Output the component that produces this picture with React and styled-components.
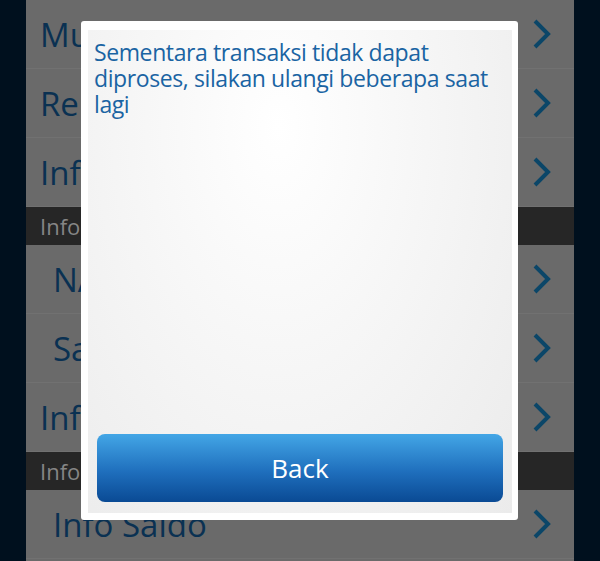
import styled, { createGlobalStyle } from "styled-components";

const GlobalStyle = createGlobalStyle`
  html, body {
    margin: 0;
    padding: 0;
    background: #00101e;
    overflow: hidden;
  }
  body {
    font-family: "Open Sans", "Noto Sans", sans-serif;
  }
`;

const menu = [
  { type: "row", label: "Mutasi Rekening" },
  { type: "row", label: "Rekening" },
  { type: "row", label: "Info Kartu Kredit" },
  { type: "header", label: "Info Lainnya" },
  { type: "row", label: "NAB Reksadana", indent: true },
  { type: "row", label: "Saldo Reksadana", indent: true },
  { type: "row", label: "Info Kurs" },
  { type: "header", label: "Info Rekening" },
  { type: "row", label: "Info Saldo", indent: true },
];

const Chevron = () => (
  <svg width="20" height="30" viewBox="0 0 20 30">
    <path
      d="M3 2 L16 15 L3 28"
      fill="none"
      stroke="#0b4668"
      strokeWidth="4"
      strokeLinejoin="miter"
    />
  </svg>
);

const App = () => {
  return (
    <>
      <GlobalStyle />
      <Screen>
        <Side />
        <List>
          {menu.map((item, i) =>
            item.type === "header" ? (
              <Header key={i}>{item.label}</Header>
            ) : (
              <Row key={i}>
                <RowLabel $indent={item.indent}>{item.label}</RowLabel>
                <Chevron />
              </Row>
            )
          )}
        </List>
        <Side />
        <Dialog>
          <Panel>
            <Message>
              Sementara transaksi tidak dapat diproses, silakan ulangi beberapa
              saat lagi
            </Message>
            <BackButton>Back</BackButton>
          </Panel>
        </Dialog>
      </Screen>
    </>
  );
};

const Screen = styled.div`
  position: relative;
  display: flex;
  width: 600px;
  height: 561px;
  overflow: hidden;
`;

const Side = styled.div`
  width: 26px;
  flex-shrink: 0;
  background: #00101e;
`;

const List = styled.div`
  flex: 1;
  display: flex;
  flex-direction: column;
  background: #6a6a6a;
`;

const Row = styled.div`
  height: 68px;
  flex-shrink: 0;
  display: flex;
  align-items: center;
  justify-content: space-between;
  padding: 0 22px 0 14px;
  border-bottom: 1px solid #717171;
`;

const RowLabel = styled.span`
  padding-left: ${(p) => (p.$indent ? "13px" : "0")};
  font-size: 33px;
  color: #0a3152;
  white-space: nowrap;
`;

const Header = styled.div`
  height: 38px;
  flex-shrink: 0;
  display: flex;
  align-items: center;
  padding-left: 14px;
  background: #262626;
  color: #858585;
  font-size: 22px;
`;

const Dialog = styled.div`
  position: absolute;
  left: 81px;
  top: 21px;
  width: 437px;
  height: 499px;
  box-sizing: border-box;
  padding: 9px 6px 7px 7px;
  background: #ffffff;
  border-radius: 3px;
  display: flex;
`;

const Panel = styled.div`
  flex: 1;
  display: flex;
  flex-direction: column;
  justify-content: space-between;
  padding: 9px 9px 11px 6px;
  background: radial-gradient(
    ellipse at 45% 20%,
    #ffffff 0%,
    #f6f6f6 45%,
    #ebebeb 100%
  );
`;

const Message = styled.p`
  margin: 0;
  font-size: 23px;
  letter-spacing: -0.4px;
  line-height: 26px;
  color: #1a64a3;
`;

const BackButton = styled.button`
  height: 68px;
  margin-left: 3px;
  border: none;
  border-radius: 8px;
  background: linear-gradient(to bottom, #43a6e6 0%, #1f6fbd 55%, #0a4a94 100%);
  color: #ffffff;
  font-family: "Open Sans", "Noto Sans", sans-serif;
  font-size: 26px;
  cursor: pointer;
`;

export default App;
